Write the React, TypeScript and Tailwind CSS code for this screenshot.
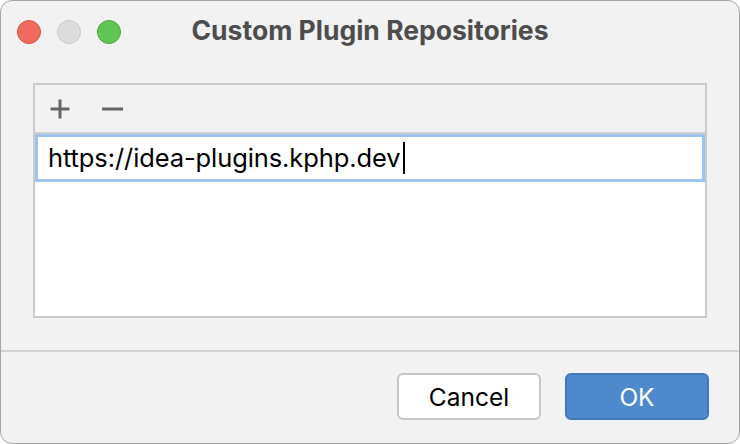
import React from "react";

export default function App() {
  return (
    <div className="w-[740px] h-[444px] bg-white" style={{ fontFamily: "Inter, 'Liberation Sans', Arial, sans-serif" }}>
      <div className="w-[740px] h-[444px] rounded-[12px] border border-[#a6a6a6] bg-[#f2f2f2] flex flex-col overflow-hidden">
        {/* Title bar */}
        <div className="h-[61px] grid grid-cols-[1fr_auto_1fr] items-center">
          <div className="flex items-center gap-[16px] pl-[16px] pt-[1px]">
            <div className="w-[24px] h-[24px] rounded-full bg-[#ed6a5e] border border-[#d4574c]" />
            <div className="w-[24px] h-[24px] rounded-full bg-[#dcdcdc] border border-[#c8c8c8]" />
            <div className="w-[24px] h-[24px] rounded-full bg-[#61c554] border border-[#4ea83f]" />
          </div>
          <div className="text-[26.5px] font-bold text-[#4d4d4d] leading-none pb-[3px]">Custom Plugin Repositories</div>
          <div />
        </div>
        {/* Content */}
        <div className="px-[32px] pt-[21px]">
          <div className="h-[235px] border-2 border-[#cbcbcb] flex flex-col bg-white">
            <div className="h-[49px] bg-[#f2f2f2] border-b-2 border-[#cfcfcf] flex items-center pl-[14px] gap-[30px]">
              <svg width="22" height="22" viewBox="0 0 22 22">
                <path d="M11 1.5V20.5M1.5 11H20.5" stroke="#666666" strokeWidth="3" />
              </svg>
              <svg width="22" height="22" viewBox="0 0 22 22">
                <path d="M1 11H22" stroke="#666666" strokeWidth="3" />
              </svg>
            </div>
            <div className="h-[48px] border-[3px] border-[#9cc4ef] bg-white flex items-center pl-[10px]">
              <span className="text-[25.5px] text-black leading-none tracking-[-0.1px]">https://idea-plugins.kphp.dev</span>
              <span className="w-[2px] h-[32px] bg-black ml-[2px]" />
            </div>
            <div className="flex-1 bg-white" />
          </div>
        </div>
        <div className="mt-[32px] border-t-2 border-[#d3d3d3]" />
        <div className="flex justify-end gap-[24px] pr-[30px] pt-[21px]">
          <button className="w-[144px] h-[47px] rounded-[6px] bg-white border-2 border-[#c6c6c6] text-[24.5px] text-black pt-[2px]">Cancel</button>
          <button className="w-[144px] h-[47px] rounded-[6px] bg-[#4e8acb] border-2 border-[#3f78b8] text-[24.5px] text-white pt-[2px]">OK</button>
        </div>
      </div>
    </div>
  );
}
